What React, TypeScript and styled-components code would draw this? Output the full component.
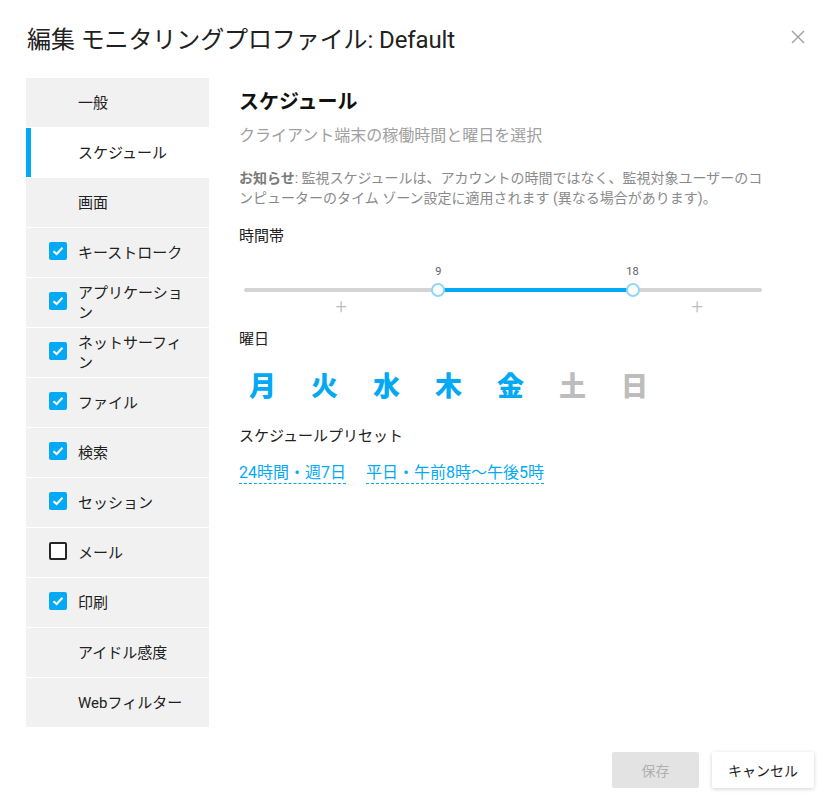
import React, { useState } from 'react';
import styled, { createGlobalStyle } from 'styled-components';

const GlobalStyle = createGlobalStyle`
	html, body {
		margin: 0;
		padding: 0;
		background: #fff;
	}
	body {
		font-family: Roboto, "Noto Sans CJK JP", "Noto Sans", sans-serif;
		color: #212121;
	}
`;

const BLUE = '#03a9f4';

const Dialog = styled.div`
	width: 838px;
	height: 808px;
	display: flex;
	flex-direction: column;
`;

const Header = styled.header`
	height: 78px;
	display: flex;
	align-items: center;
	justify-content: space-between;
	box-sizing: border-box;
	padding: 0 30px 4px 27px;
`;

const Title = styled.h1`
	margin: 0;
	font-size: 24px;
	font-weight: 400;
	letter-spacing: -0.1px;
	color: #212121;
`;

const CloseButton = styled.button`
	border: none;
	background: none;
	padding: 0;
	width: 20px;
	height: 20px;
	cursor: pointer;
	display: flex;
	align-items: center;
	justify-content: center;
`;

const Body = styled.div`
	display: flex;
	gap: 30px;
	padding: 0 73px 0 26px;
`;

const Sidebar = styled.nav`
	width: 183px;
	flex-shrink: 0;
	display: flex;
	flex-direction: column;
	gap: 1px;
`;

const NavItem = styled.div<{ $active?: boolean }>`
	position: relative;
	height: 49px;
	display: flex;
	align-items: center;
	background: ${(p) => (p.$active ? '#fff' : '#f1f1f1')};
	box-sizing: border-box;
	padding: 0 22px 0 23px;
	font-size: 15px;
	line-height: 20px;
	color: #212121;
	cursor: pointer;

	&::before {
		content: '';
		display: ${(p) => (p.$active ? 'block' : 'none')};
		position: absolute;
		left: 0;
		top: 0;
		bottom: 0;
		width: 5px;
		background: ${BLUE};
	}
`;

const CheckSlot = styled.span`
	width: 18px;
	height: 18px;
	flex-shrink: 0;
	margin-right: 11px;
	margin-top: -3px;
	display: flex;
`;

const Box = styled.span<{ $checked: boolean }>`
	width: 18px;
	height: 18px;
	box-sizing: border-box;
	border-radius: 2px;
	background: ${(p) => (p.$checked ? BLUE : '#fff')};
	border: ${(p) => (p.$checked ? 'none' : '2px solid #262626')};
	display: flex;
	align-items: center;
	justify-content: center;
`;

const NavLabel = styled.span`
	flex: 1;
`;

const Content = styled.section`
	flex: 1;
	min-width: 0;
	padding-top: 10px;
`;

const Heading = styled.h2`
	margin: 0;
	font-size: 20px;
	line-height: 28px;
	font-weight: 700;
	color: #111;
`;

const Subtitle = styled.p`
	margin: 9px 0 0;
	font-size: 16px;
	line-height: 22px;
	color: #a0a0a0;
`;

const Notice = styled.p`
	margin: 21px 0 0;
	font-size: 14px;
	line-height: 20px;
	color: #8a8a8a;

	b {
		font-weight: 700;
		color: #7a7a7a;
	}
`;

const Label = styled.div<{ $top: number }>`
	margin-top: ${(p) => p.$top}px;
	font-size: 15px;
	line-height: 20px;
	color: #212121;
`;

const SliderWrap = styled.div`
	position: relative;
	height: 83px;
	margin: 0 3px 0 5px;
`;

const Track = styled.div`
	position: absolute;
	left: 0;
	right: 0;
	top: 42px;
	height: 4px;
	border-radius: 2px;
	background: #d4d4d4;
`;

const Range = styled.div`
	position: absolute;
	top: 42px;
	height: 4px;
	background: ${BLUE};
`;

const Handle = styled.div`
	position: absolute;
	top: 37px;
	width: 14px;
	height: 14px;
	margin-left: -7px;
	box-sizing: border-box;
	border-radius: 50%;
	background: #fff;
	border: 2px solid #8fd6f8;
`;

const HandleValue = styled.span`
	position: absolute;
	top: 19px;
	transform: translateX(-50%);
	font-size: 11px;
	line-height: 14px;
	color: #616161;
`;

const Plus = styled.span`
	position: absolute;
	top: 50px;
	transform: translateX(-50%);
	font-size: 20px;
	font-weight: 300;
	line-height: 20px;
	color: #bdbdbd;
`;

const Days = styled.div`
	display: flex;
	gap: 36px;
	padding-left: 10px;
	margin-top: 23px;
`;

const Day = styled.span<{ $on: boolean }>`
	width: 26px;
	text-align: center;
	font-size: 27px;
	line-height: 30px;
	font-weight: 900;
	color: ${(p) => (p.$on ? BLUE : '#bdbdbd')};
	cursor: pointer;
`;

const Presets = styled.div`
	display: flex;
	gap: 20px;
	margin-top: 17px;
`;

const Preset = styled.a`
	font-size: 16px;
	line-height: 20px;
	color: ${BLUE};
	border-bottom: 1px dashed ${BLUE};
	cursor: pointer;
	white-space: nowrap;
`;

const Footer = styled.footer`
	margin-top: auto;
	height: 81px;
	display: flex;
	justify-content: flex-end;
	align-items: flex-start;
	padding: 25px 24px 0 0;
	box-sizing: border-box;
	gap: 13px;
`;

const Button = styled.button<{ $disabled?: boolean }>`
	height: 36px;
	padding: 0 16px;
	border: none;
	border-radius: 2px;
	font-family: inherit;
	font-size: 14px;
	background: ${(p) => (p.$disabled ? '#e3e3e3' : '#fff')};
	color: ${(p) => (p.$disabled ? '#b0b0b0' : '#212121')};
	box-shadow: ${(p) => (p.$disabled ? 'none' : '0 1px 4px rgba(0,0,0,0.18)')};
	min-width: 87px;
	cursor: ${(p) => (p.$disabled ? 'default' : 'pointer')};
`;

const CheckIcon = () => (
	<svg width="12" height="10" viewBox="0 0 12 10">
		<path d="M1.5 5.2 L4.6 8 L10.5 1.8" fill="none" stroke="#fff" strokeWidth="2" />
	</svg>
);

const CloseIcon = () => (
	<svg width="14" height="14" viewBox="0 0 14 14">
		<path d="M1 1 L13 13 M13 1 L1 13" stroke="#9e9e9e" strokeWidth="1.4" />
	</svg>
);

type Nav = { label: string; checked?: boolean };

const navItems: Nav[] = [
	{ label: '一般' },
	{ label: 'スケジュール' },
	{ label: '画面' },
	{ label: 'キーストローク', checked: true },
	{ label: 'アプリケーション', checked: true },
	{ label: 'ネットサーフィン', checked: true },
	{ label: 'ファイル', checked: true },
	{ label: '検索', checked: true },
	{ label: 'セッション', checked: true },
	{ label: 'メール', checked: false },
	{ label: '印刷', checked: true },
	{ label: 'アイドル感度' },
	{ label: 'Webフィルター' },
];

const days = [
	{ d: '月', on: true },
	{ d: '火', on: true },
	{ d: '水', on: true },
	{ d: '木', on: true },
	{ d: '金', on: true },
	{ d: '土', on: false },
	{ d: '日', on: false },
];

export default function App() {
	const [active, setActive] = useState(1);
	const [from, to] = [9, 18];
	const pct = (h: number) => `${(h / 24) * 100}%`;

	return (
		<>
			<GlobalStyle />
			<Dialog>
				<Header>
					<Title>編集 モニタリングプロファイル: Default</Title>
					<CloseButton aria-label="close">
						<CloseIcon />
					</CloseButton>
				</Header>

				<Body>
					<Sidebar>
						{navItems.map((item, i) => (
							<NavItem key={item.label} $active={i === active} onClick={() => setActive(i)}>
								<CheckSlot>
									{item.checked !== undefined && (
										<Box $checked={item.checked}>{item.checked && <CheckIcon />}</Box>
									)}
								</CheckSlot>
								<NavLabel>{item.label}</NavLabel>
							</NavItem>
						))}
					</Sidebar>

					<Content>
						<Heading>スケジュール</Heading>
						<Subtitle>クライアント端末の稼働時間と曜日を選択</Subtitle>
						<Notice>
							<b>お知らせ</b>: 監視スケジュールは、アカウントの時間ではなく、監視対象ユーザーのコンピューターのタイム ゾーン設定に適用されます (異なる場合があります)。
						</Notice>

						<Label $top={18}>時間帯</Label>
						<SliderWrap>
							<Track />
							<Range style={{ left: pct(from), width: pct(to - from) }} />
							<Plus style={{ left: pct(from / 2) }}>+</Plus>
							<Plus style={{ left: pct((to + 24) / 2) }}>+</Plus>
							<HandleValue style={{ left: pct(from) }}>{from}</HandleValue>
							<HandleValue style={{ left: pct(to) }}>{to}</HandleValue>
							<Handle style={{ left: pct(from) }} />
							<Handle style={{ left: pct(to) }} />
						</SliderWrap>

						<Label $top={0}>曜日</Label>
						<Days>
							{days.map((x) => (
								<Day key={x.d} $on={x.on}>
									{x.d}
								</Day>
							))}
						</Days>

						<Label $top={24}>スケジュールプリセット</Label>
						<Presets>
							<Preset>24時間・週7日</Preset>
							<Preset>平日・午前8時〜午後5時</Preset>
						</Presets>
					</Content>
				</Body>

				<Footer>
					<Button $disabled>保存</Button>
					<Button>キャンセル</Button>
				</Footer>
			</Dialog>
		</>
	);
}
